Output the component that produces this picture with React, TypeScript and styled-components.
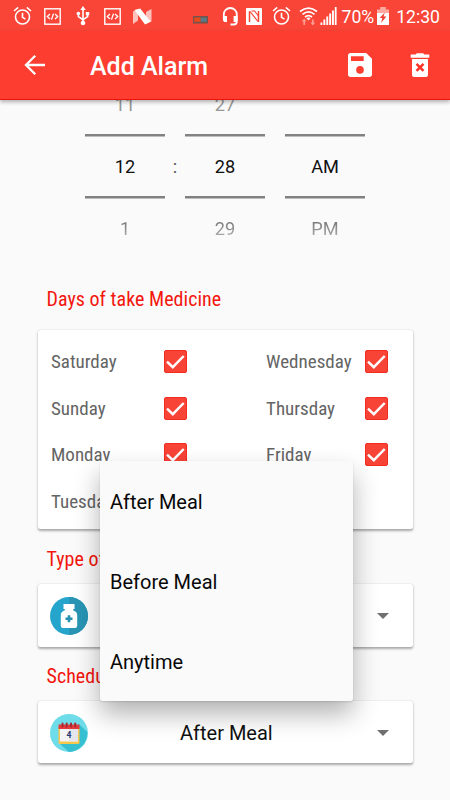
import React from 'react';
import styled, { createGlobalStyle } from 'styled-components';

const GlobalStyle = createGlobalStyle`
  * { box-sizing: border-box; }
  html, body { margin: 0; padding: 0; background: #fafafa; overflow: hidden; }
  body { font-family: Roboto, "Liberation Sans", sans-serif; }
  svg { display: block; flex: none; }
`;

const Screen = styled.div`
  position: relative;
  width: 450px;
  height: 800px;
  overflow: hidden;
  background: #fafafa;
  display: flex;
  flex-direction: column;
`;

const StatusBar = styled.header`
  height: 31px;
  flex: none;
  background: #f84537;
  color: #fff;
  display: flex;
  align-items: center;
  justify-content: space-between;
  padding: 1px 10px 0 13px;
`;

const StatusGroup = styled.div`
  display: flex;
  align-items: center;
`;

const StatusItem = styled.span<{ $gap?: number; $drop?: number }>`
  display: flex;
  margin-left: ${(p) => p.$gap ?? 0}px;
  margin-top: ${(p) => p.$drop ?? 0}px;
`;

const StatusText = styled.span<{ $gap: number; $weight?: number }>`
  margin-left: ${(p) => p.$gap}px;
  margin-top: 1px;
  font-size: 17.6px;
  font-weight: ${(p) => p.$weight ?? 400};
  line-height: 22px;
  white-space: nowrap;
`;

const AppBar = styled.nav`
  height: 69px;
  flex: none;
  z-index: 1;
  background: #fd3d30;
  border-bottom: 1px solid #ee130b;
  box-shadow: 0 2px 4px rgba(0, 0, 0, 0.3);
  color: #fff;
  display: flex;
  align-items: center;
  padding: 0 18px 0 23px;
`;

const IconButton = styled.button<{ $gap?: number }>`
  border: 0;
  padding: 0;
  margin-left: ${(p) => p.$gap ?? 0}px;
  background: none;
  color: inherit;
  display: flex;
`;

const Title = styled.h1`
  margin: 3px 0 0 43px;
  flex: 1;
  font-size: 25px;
  font-weight: 500;
  line-height: 30px;
`;

const Content = styled.main`
  flex: 1;
  display: flex;
  flex-direction: column;
  padding: 0 38px;
`;

const Picker = styled.section`
  display: grid;
  grid-template-columns: 80px 20px 80px 20px 80px;
  margin-left: 47px;
  margin-top: -27px;
  height: 186px;
  font-size: 18.2px;
  color: #111;
`;

const Wheel = styled.div`
  display: grid;
  grid-template-rows: 60.5px 65px 60.5px;
  text-align: center;
`;

const Option = styled.div`
  line-height: 64px;
  color: #979797;
`;

const NextOption = styled(Option)`
  line-height: 60px;
  background: linear-gradient(#777 38%, #aaa 62%);
  background-clip: text;
  -webkit-background-clip: text;
  color: transparent;
`;

const Selected = styled.div`
  display: flex;
  justify-content: center;
  line-height: 66px;
  background:
    linear-gradient(#828282, #828282) 0 0 / 100% 2.5px no-repeat,
    linear-gradient(#808080, #808080) 0 100% / 100% 2.5px no-repeat;
`;

const Colon = styled.div`
  text-align: center;
  padding-top: 61px;
  line-height: 66px;
  color: #555;
`;

const SectionTitle = styled.h2<{ $top: number; $bottom: number }>`
  margin: ${(p) => p.$top}px 0 ${(p) => p.$bottom}px 8.5px;
  font-family: "Roboto Condensed", Roboto, "Liberation Sans", sans-serif;
  font-stretch: 75%;
  font-weight: 380;
  font-size: 20px;
  line-height: 24px;
  letter-spacing: 0.03px;
  color: #f3160e;
  white-space: nowrap;
`;

const Card = styled.section`
  width: 374.5px;
  background: #fff;
  border-radius: 2.5px;
  box-shadow: 0 1.5px 2.5px rgba(0, 0, 0, 0.32), 0 0 1px rgba(0, 0, 0, 0.15);
`;

const DaysCard = styled(Card)`
  height: 199px;
  padding: 8px 24.5px 0 13px;
  display: flex;
  justify-content: space-between;
`;

const DayColumn = styled.div<{ $width: number }>`
  width: ${(p) => p.$width}px;
`;

const DayRow = styled.label`
  height: 46.7px;
  display: flex;
  align-items: center;
  justify-content: space-between;
  font-family: "Roboto Condensed", Roboto, "Liberation Sans", sans-serif;
  font-stretch: 75%;
  font-weight: 380;
  font-size: 19px;
  color: #646464;
`;

const Check = styled.span`
  width: 23px;
  height: 23px;
  border-radius: 2px;
  border: 1px solid #f42c1f;
  background: #f84337;
  display: flex;
`;

const SelectCard = styled(Card)`
  height: 62.5px;
  flex: none;
  padding: 1.5px 24px 0 12px;
  display: flex;
  align-items: center;
  justify-content: space-between;
`;

const SelectValue = styled.span`
  flex: 1;
  padding: 1px 0 0 92px;
  font-size: 20px;
  color: #111;
`;

const Caret = styled.i`
  border: 6px solid transparent;
  border-top-color: #707070;
  border-bottom: 0;
`;

const Menu = styled.ul`
  position: absolute;
  z-index: 2;
  left: 100px;
  top: 461px;
  width: 252.5px;
  height: 240px;
  margin: 0;
  padding: 0;
  list-style: none;
  background: #fafafa;
  border-radius: 2.5px;
  box-shadow: 0 13px 26px rgba(0, 0, 0, 0.3), 0 1px 2px rgba(0, 0, 0, 0.12);
`;

const MenuItem = styled.li`
  height: 80px;
  padding: 1px 0 0 10px;
  display: flex;
  align-items: center;
  font-size: 20px;
  color: #080808;
`;

const AlarmGlyph = () => (
  <svg width="19" height="20" viewBox="0 0 19 20" fill="none" stroke="#fff" strokeWidth="1.6">
    <circle cx="9.5" cy="11" r="7" />
    <path d="M9.5 6.8v4.6l3 1.7M1 5l4.2-3.6M18 5l-4.2-3.6" />
  </svg>
);

const CodeGlyph = () => (
  <svg width="17" height="17" viewBox="0 0 17 17" fill="none" stroke="#fff">
    <rect x=".8" y=".8" width="15.4" height="15.4" strokeWidth="1.4" />
    <path d="M6 6 3.3 8.5 6 11M11 6l2.7 2.5L11 11M9.5 5.6l-2 6" strokeWidth="1.3" />
  </svg>
);

const UsbGlyph = () => (
  <svg width="14" height="20" viewBox="0 0 14 20" fill="none" stroke="#fff" strokeWidth="1.6">
    <path d="M7 3v14M2.4 8v2.6L7 13.7l4.6-3.1V8" />
    <path d="M7 0 9.7 4H4.3zM9.8 6h3.4v3.3H9.8z" fill="#fff" stroke="none" />
    <circle cx="2.4" cy="7.5" r="1.8" fill="#fff" stroke="none" />
    <circle cx="7" cy="17" r="2.3" fill="#fff" stroke="none" />
  </svg>
);

const NougatGlyph = () => (
  <svg width="19" height="17" viewBox="0 0 19 17">
    <path d="M0 3.5 5 1v11.5L0 16zM13 4l5.5-3v12.5L13 16z" fill="#ffc1bb" />
    <path d="M1.5 2 7.2.5 17.5 13.5 12 16.5z" fill="#fff" />
  </svg>
);

const BatteryBarGlyph = () => (
  <svg width="15" height="8" viewBox="0 0 15 8">
    <rect width="15" height="7.5" fill="#75534d" />
    <rect x="1.2" y="1.5" width="6.5" height="4.3" fill="#e9481c" />
    <rect x="7.7" y="1.5" width="6" height="4.3" fill="#597984" />
  </svg>
);

const HeadsetGlyph = () => (
  <svg width="17" height="19" viewBox="0 0 17 19" fill="none" stroke="#fff">
    <path d="M1.8 12V7.5a6.5 6.5 0 0 1 13 0v7c0 2-1 3-3 3H8.5" strokeWidth="1.8" />
    <path d="M1 9h4v6H2.2L1 13.5zM11.6 9h4v4.5L14.2 15h-2.6z" fill="#fff" stroke="none" />
  </svg>
);

const NfcGlyph = () => (
  <svg width="16" height="17" viewBox="0 0 16 17">
    <rect width="16" height="17" rx=".8" fill="#fff" />
    <path d="M3.5 14V3.2M12.5 14V3" fill="none" stroke="#f84537" strokeWidth="1.5" />
    <path d="m4 3.5 8 10M5.5 3h3l4 5" fill="none" stroke="#f84537" strokeWidth="1.2" />
  </svg>
);

const WifiGlyph = () => (
  <svg width="19" height="19" viewBox="0 0 19 19" fill="none" stroke="#fff" strokeWidth="1.7">
    <path d="M1 4.5q8.5-6.7 17 0M3.5 7.3q6-4.7 12 0M6 10q3.5-2.7 7 0" />
    <path d="m7.3 11 2.2 2.6 2.2-2.6q-2.2-1.2-4.4 0z" fill="#fff" stroke="none" />
    <path d="M5.2 18v-4.5M13.8 12.5V16" stroke="#ff9b92" />
    <path d="m2.8 14.5 2.4-3 2.4 3zM11.4 15.5l2.4 3 2.4-3z" fill="#ff9b92" stroke="none" />
  </svg>
);

const SignalGlyph = () => (
  <svg width="17" height="18" viewBox="0 0 17 18" fill="#fff">
    <path d="M.5 15.5h1.8V18H.5zM3.4 12.6h1.9V18H3.4zM6.3 9.5h1.9V18H6.3zM9.2 6.5h1.9V18H9.2zM12 3.5h1.9V18H12zM14.8 0h1.8v18h-1.8z" />
  </svg>
);

const BatteryGlyph = () => (
  <svg width="12" height="18" viewBox="0 0 12 18">
    <path d="M0 2.5h3.2V0h5.6v2.5H12V6H0z" fill="#ffa9a1" />
    <path d="M0 6h12v12H0z" fill="#fff" />
    <path d="M7.8 5.5 2.7 11h2.7L4 16l5.4-6.4H6.5z" fill="#f03f31" />
  </svg>
);

const BackIcon = () => (
  <svg width="24" height="24" viewBox="0 0 24 24" fill="none" stroke="#fff" strokeWidth="2.3">
    <path d="M22 12H3.5M12.2 2.8 3 12l9.2 9.2" />
  </svg>
);

const SaveIcon = () => (
  <svg width="24" height="24" viewBox="0 0 24 24">
    <path
      fill="#fff"
      fillRule="evenodd"
      d="M2.7 0h15.5L24 5.8v15.5a2.7 2.7 0 0 1-2.7 2.7H2.7A2.7 2.7 0 0 1 0 21.3V2.7A2.7 2.7 0 0 1 2.7 0zM3 3.3V8h12.7V3.3zM12 13.1a3.8 3.8 0 1 0 0 7.6 3.8 3.8 0 0 0 0-7.6z"
    />
  </svg>
);

const DeleteIcon = () => (
  <svg width="24" height="24" viewBox="0 0 24 24">
    <path fill="#fff" d="M2.7 1.5h5L8.8.2h6.4l1.1 1.3h5v3.2H2.7zM4 6h16v15.4a2.6 2.6 0 0 1-2.6 2.6H6.6A2.6 2.6 0 0 1 4 21.4z" />
    <path d="m8.5 10.8 7 7M15.5 10.8l-7 7" stroke="#fb3428" strokeWidth="2.5" />
  </svg>
);

const CheckIcon = () => (
  <svg width="21" height="21" viewBox="0 0 21 21" fill="none">
    <path d="m2 10.7 5.8 5.5L18.7 5" stroke="#fff" strokeWidth="2.5" />
  </svg>
);

const MedicineIcon = () => (
  <svg width="38" height="38" viewBox="0 0 38 38">
    <circle cx="19" cy="19" r="19" fill="#25a5cb" />
    <path d="M19 0a19 19 0 0 1 0 38z" fill="#2994b4" />
    <path d="M13.5 7h11v5h-1.3v1.3c2.8 1.1 4 2.5 4 5v10.5q0 2.2-2.2 2.2H13q-2.2 0-2.2-2.2V18.3c0-2.5 1.2-3.9 4-5V12h-1.3z" fill="#fff" />
    <path d="M19 18.2v7M15.5 21.7h7" stroke="#278faf" strokeWidth="2.6" />
  </svg>
);

const CalendarIcon = () => (
  <svg width="38" height="38" viewBox="0 0 38 38">
    <circle cx="19" cy="19" r="19" fill="#6edde9" />
    <path d="m29 10 8.2 8A19 19 0 0 1 19 38L9 29z" fill="#36bfd1" />
    <rect x="8.5" y="13" width="21" height="17" rx="1.5" fill="#f8c64b" />
    <path d="M10 13h18v14.5H10z" fill="#f4f4f7" />
    <path d="M19 13h9v14.5h-9z" fill="#e4e5ed" />
    <path d="M8.5 10.5h21V15h-21z" fill="#e33a3b" />
    <path d="M12.5 9.5v3M16.7 9.5v3M21 9.5v3M25.2 9.5v3" stroke="#a82a32" strokeWidth="2" strokeLinecap="round" />
    <text x="19" y="24.2" textAnchor="middle" fontFamily="Roboto" fontWeight="700" fontSize="8.5" fill="#273a71">4</text>
  </svg>
);

const wheels = [
  ['11', '12', '1'],
  ['27', '28', '29'],
  ['', 'AM', 'PM'],
];

const TimeWheel = ({ values }: { values: string[] }) => (
  <Wheel>
    <Option>{values[0]}</Option>
    <Selected>{values[1]}</Selected>
    <NextOption>{values[2]}</NextOption>
  </Wheel>
);

const Days = ({ days, width }: { days: string[]; width: number }) => (
  <DayColumn $width={width}>
    {days.map((day) => (
      <DayRow key={day}>
        {day}
        <Check><CheckIcon /></Check>
      </DayRow>
    ))}
  </DayColumn>
);

export default function App() {
  return (
    <>
      <GlobalStyle />
      <Screen>
        <StatusBar>
          <StatusGroup>
            <StatusItem><AlarmGlyph /></StatusItem>
            <StatusItem $gap={12}><CodeGlyph /></StatusItem>
            <StatusItem $gap={15}><UsbGlyph /></StatusItem>
            <StatusItem $gap={14}><CodeGlyph /></StatusItem>
            <StatusItem $gap={12}><NougatGlyph /></StatusItem>
          </StatusGroup>
          <StatusGroup>
            <StatusItem $drop={8}><BatteryBarGlyph /></StatusItem>
            <StatusItem $gap={14}><HeadsetGlyph /></StatusItem>
            <StatusItem $gap={7}><NfcGlyph /></StatusItem>
            <StatusItem $gap={10}><AlarmGlyph /></StatusItem>
            <StatusItem $gap={8}><WifiGlyph /></StatusItem>
            <StatusItem $gap={2}><SignalGlyph /></StatusItem>
            <StatusText $gap={5}>70%</StatusText>
            <StatusItem $gap={3}><BatteryGlyph /></StatusItem>
            <StatusText $gap={7} $weight={450}>12:30</StatusText>
          </StatusGroup>
        </StatusBar>
        <AppBar>
          <IconButton aria-label="Back"><BackIcon /></IconButton>
          <Title>Add Alarm</Title>
          <IconButton aria-label="Save"><SaveIcon /></IconButton>
          <IconButton aria-label="Delete" $gap={36}><DeleteIcon /></IconButton>
        </AppBar>
        <Content>
          <Picker>
            <TimeWheel values={wheels[0]} />
            <Colon>:</Colon>
            <TimeWheel values={wheels[1]} />
            <span />
            <TimeWheel values={wheels[2]} />
          </Picker>
          <SectionTitle $top={28} $bottom={19}>Days of take Medicine</SectionTitle>
          <DaysCard>
            <Days days={['Saturday', 'Sunday', 'Monday', 'Tuesday']} width={136} />
            <Days days={['Wednesday', 'Thursday', 'Friday']} width={122} />
          </DaysCard>
          <SectionTitle $top={18} $bottom={13}>Type of Medicine</SectionTitle>
          <SelectCard>
            <MedicineIcon />
            <Caret />
          </SelectCard>
          <SectionTitle $top={17} $bottom={13}>Schedule</SectionTitle>
          <SelectCard>
            <CalendarIcon />
            <SelectValue>After Meal</SelectValue>
            <Caret />
          </SelectCard>
        </Content>
        <Menu>
          <MenuItem>After Meal</MenuItem>
          <MenuItem>Before Meal</MenuItem>
          <MenuItem>Anytime</MenuItem>
        </Menu>
      </Screen>
    </>
  );
}
